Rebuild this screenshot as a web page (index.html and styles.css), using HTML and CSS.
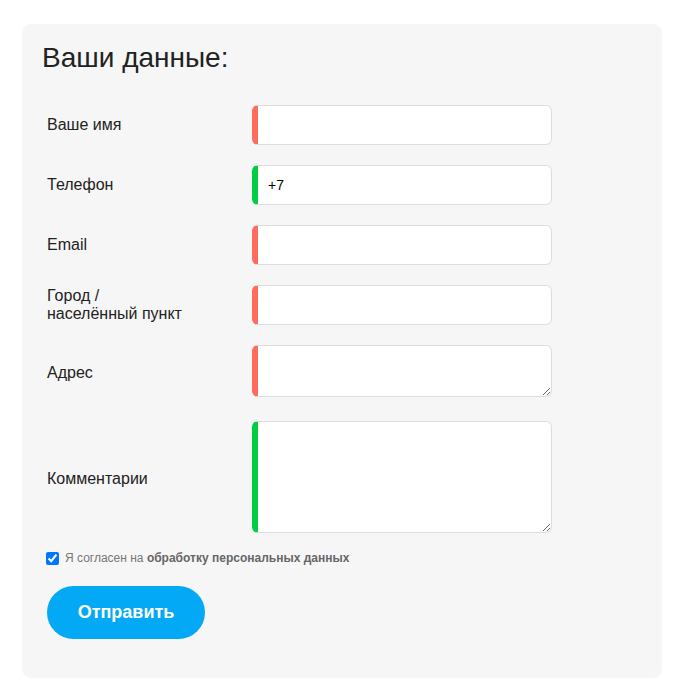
FILE: index.html
```html
<!DOCTYPE html>
<html lang="ru">
<head>
<meta charset="utf-8">
<title>Ваши данные</title>
<link rel="stylesheet" href="styles.css">
</head>
<body>
<div class="card">
  <h2 class="title">Ваши данные:</h2>
  <form class="form">
    <div class="row">
      <label class="label">Ваше имя</label>
      <input class="field bad" type="text">
    </div>
    <div class="row">
      <label class="label">Телефон</label>
      <input class="field ok" type="text" value="+7">
    </div>
    <div class="row">
      <label class="label">Email</label>
      <input class="field bad" type="text">
    </div>
    <div class="row">
      <label class="label">Город /<br>населённый пункт</label>
      <input class="field bad" type="text">
    </div>
    <div class="row">
      <label class="label label-area">Адрес</label>
      <textarea class="field area-small bad"></textarea>
    </div>
    <div class="row row-comment">
      <label class="label label-area">Комментарии</label>
      <textarea class="field area-big ok"></textarea>
    </div>
    <div class="agree">
      <input class="check" type="checkbox" checked>
      <span>Я согласен на <b>обработку персональных данных</b></span>
    </div>
    <button class="submit" type="button">Отправить</button>
  </form>
</div>
</body>
</html>
```
FILE: styles.css
```css
html, body {
  margin: 0;
  padding: 0;
  background: #ffffff;
}
body {
  padding: 24px 25px 22px 22px;
  font-family: "Liberation Sans", Arial, sans-serif;
  color: #222222;
}
.card {
  width: 640px;
  box-sizing: border-box;
  background: #f6f6f6;
  border-radius: 9px;
  padding: 18px 20px 39px 20px;
}
.title {
  margin: 0;
  font-size: 28px;
  line-height: 32px;
  font-weight: normal;
  color: #222222;
}
.form {
  margin-top: 31px;
  padding-left: 5px;
  display: flex;
  flex-direction: column;
  gap: 20px;
}
.row {
  display: flex;
  align-items: center;
}
.row-comment {
  margin-top: 4px;
}
.label {
  width: 205px;
  flex: none;
  font-size: 16px;
  line-height: 18px;
  color: #222222;
}
.label-area {
  padding-top: 3px;
}
.field {
  box-sizing: border-box;
  width: 300px;
  height: 40px;
  margin: 0;
  border: 1px solid #dddddd;
  border-left: 6px solid #ff6b5e;
  border-radius: 6px;
  background: #ffffff;
  padding: 0 10px;
  font-family: "Liberation Sans", Arial, sans-serif;
  font-size: 14px;
  color: #000000;
  outline: none;
  display: block;
}
.field.ok {
  border-left-color: #00cc44;
}
.area-small {
  height: 52px;
  padding: 8px 10px;
}
.area-big {
  height: 112px;
  padding: 8px 10px;
}
.agree {
  margin-top: -3px;
  display: flex;
  align-items: center;
  gap: 6px;
  font-size: 12px;
  line-height: 16px;
  color: #777777;
}
.agree b {
  color: #666666;
}
.check {
  margin: 0;
  width: 13px;
  height: 13px;
  margin-left: -1px;
}
.submit {
  align-self: flex-start;
  margin-top: 0;
  height: 53px;
  width: 158px;
  border: none;
  border-radius: 27px;
  background: #03a9f4;
  color: #ffffff;
  font-family: "Liberation Sans", Arial, sans-serif;
  font-size: 18px;
  font-weight: bold;
  cursor: pointer;
}
```
